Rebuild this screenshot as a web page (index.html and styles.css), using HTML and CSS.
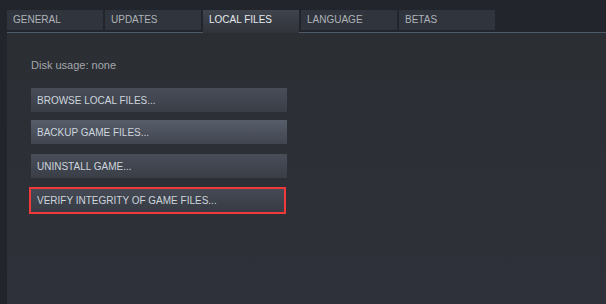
FILE: index.html
```html
<!DOCTYPE html>
<html>
	<head>
		<meta charset="UTF-8"/>
		<title>Properties - Local Files</title>
		<link rel="stylesheet" href="styles.css">
	</head>
	<body>
		<div class="page">
			<div class="tabs">
				<span class="tab">GENERAL</span>
				<span class="tab">UPDATES</span>
				<span class="tab tab-active">LOCAL FILES</span>
				<span class="tab">LANGUAGE</span>
				<span class="tab">BETAS</span>
			</div>

			<div class="content">
				<div class="disk">Disk usage: none</div>

				<button type="button" class="btn btn-first">BROWSE LOCAL FILES...</button>
				<button type="button" class="btn btn-hover">BACKUP GAME FILES...</button>
				<button type="button" class="btn btn-third">UNINSTALL GAME...</button>
				<button type="button" class="btn btn-marked">VERIFY INTEGRITY OF GAME FILES...</button>
			</div>
		</div>
	</body>
</html>
```

FILE: styles.css
```css
html, body {
	margin: 0;
	padding: 0;
	height: 100%;
	background: #22252b;
	font-family: "Liberation Sans", Arial, sans-serif;
	font-size: 11px;
}

.page {
	display: flex;
	flex-direction: column;
	box-sizing: border-box;
	height: 100%;
	padding: 10px 0 0 7px;
}

.tabs {
	display: flex;
	align-items: flex-start;
	gap: 2px;
	height: 23px;
	background: linear-gradient(to top, #4f5a67 1px, transparent 1px);
}

.tab {
	display: block;
	box-sizing: border-box;
	width: 96px;
	height: 20px;
	padding: 0 6px;
	line-height: 20px;
	font-size: 10px;
	background: #30343c;
	color: #aeb3b8;
	white-space: nowrap;
}

.tab-active {
	height: 23px;
	background: linear-gradient(#3f444d, #30333a);
	color: #e6e9ec;
}

.content {
	flex: 1;
	display: flex;
	flex-direction: column;
	align-items: flex-start;
	padding: 25px 0 0 24px;
	background: linear-gradient(#2b2e33, #2e3139);
}

.disk {
	line-height: 14px;
	color: #a3a8ad;
}

.btn {
	display: block;
	box-sizing: border-box;
	width: 256px;
	height: 24px;
	margin: 0;
	padding: 0 6px;
	border: none;
	background: linear-gradient(#484d58, #3a3e47);
	color: #cdd5dd;
	font-family: inherit;
	font-size: 10px;
	text-align: left;
	cursor: pointer;
}

.btn-first {
	margin-top: 16px;
}

.btn-hover {
	margin-top: 8px;
	background: linear-gradient(#575d6a, #40454f);
}

.btn-third {
	margin-top: 10px;
}

.btn-marked {
	margin: 9px 0 0 -2px;
	width: 257px;
	height: 27px;
	padding-left: 6px;
	border: 2px solid #f03a3a;
	background: linear-gradient(#454a54, #373b44);
}
```
